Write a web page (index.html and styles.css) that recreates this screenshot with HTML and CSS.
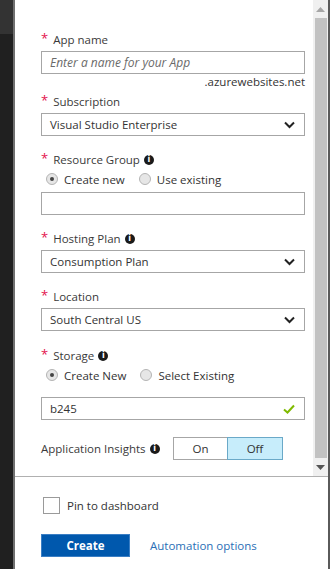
FILE: index.html
```
<!DOCTYPE html>
<html lang="en">
<head>
    <meta charset="UTF-8">
    <meta name="viewport" content="width=device-width, initial-scale=1.0">
    <title>Function App</title>
    <link rel="stylesheet" href="styles.css">
</head>
<body>
    <div class="shell">
        <div class="rail">
            <div class="rail-top"></div>
        </div>
        <div class="blade">
            <div class="content">
                <form class="form">
                    <div class="label"><span class="req">*</span>App name</div>
                    <input class="field placeholder" type="text" placeholder="Enter a name for your App">
                    <div class="suffix">.azurewebsites.net</div>

                    <div class="label sub"><span class="req">*</span>Subscription</div>
                    <div class="select">
                        <span>Visual Studio Enterprise</span>
                        <svg class="chev" width="11" height="8" viewBox="0 0 11 8"><path d="M1 1.5 L5.5 6 L10 1.5" fill="none" stroke="#222" stroke-width="2"/></svg>
                    </div>

                    <div class="label gap"><span class="req">*</span>Resource Group <span class="info">i</span></div>
                    <div class="radios">
                        <span class="radio"><span class="dot on"></span>Create new</span>
                        <span class="radio"><span class="dot"></span>Use existing</span>
                    </div>
                    <div class="field after-radios"></div>

                    <div class="label gap"><span class="req">*</span>Hosting Plan <span class="info">i</span></div>
                    <div class="select">
                        <span>Consumption Plan</span>
                        <svg class="chev" width="11" height="8" viewBox="0 0 11 8"><path d="M1 1.5 L5.5 6 L10 1.5" fill="none" stroke="#222" stroke-width="2"/></svg>
                    </div>

                    <div class="label gap"><span class="req">*</span>Location</div>
                    <div class="select">
                        <span>South Central US</span>
                        <svg class="chev" width="11" height="8" viewBox="0 0 11 8"><path d="M1 1.5 L5.5 6 L10 1.5" fill="none" stroke="#222" stroke-width="2"/></svg>
                    </div>

                    <div class="label gap wide"><span class="req">*</span>Storage <span class="info">i</span></div>
                    <div class="radios">
                        <span class="radio"><span class="dot on"></span>Create New</span>
                        <span class="radio"><span class="dot"></span>Select Existing</span>
                    </div>
                    <div class="select storage">
                        <span>b245</span>
                        <svg class="check" width="12" height="10" viewBox="0 0 12 10"><path d="M1 5.5 L4.5 8.5 L11 1.5" fill="none" stroke="#7fba00" stroke-width="2"/></svg>
                    </div>

                    <div class="insights">
                        <span class="insights-label">Application Insights <span class="info">i</span></span>
                        <div class="toggle">
                            <span class="opt">On</span>
                            <span class="opt active">Off</span>
                        </div>
                    </div>
                </form>
                <div class="scrollbar">
                    <svg class="arrow" width="9" height="5" viewBox="0 0 9 5"><path d="M0 5 L4.5 0 L9 5 Z" fill="#a6a6a6"/></svg>
                    <div class="thumb"></div>
                    <svg class="arrow" width="9" height="5" viewBox="0 0 9 5"><path d="M0 0 L4.5 5 L9 0 Z" fill="#555"/></svg>
                </div>
            </div>
            <div class="footer">
                <label class="pin"><span class="box"></span>Pin to dashboard</label>
                <div class="actions">
                    <button type="button" class="create">Create</button>
                    <a href="#" class="link">Automation options</a>
                </div>
            </div>
        </div>
    </div>
</body>
</html>
```
FILE: styles.css
```
body {
    margin: 0;
    font-family: "Open Sans", "Noto Sans", sans-serif;
    font-size: 11.5px;
    color: #333;
    background: #fff;
}
.shell {
    display: flex;
    width: 330px;
    height: 569px;
}
.rail {
    width: 13px;
    background: #202020;
    border-right: 2px solid #707070;
}
.rail-top {
    height: 34px;
    background: #333;
}
.blade {
    flex: 1;
    display: flex;
    flex-direction: column;
    border-right: 2px solid #5a5a5a;
}
.content {
    display: flex;
    height: 476px;
}
.form {
    flex: 1;
    padding: 32px 8px 0 26px;
}
.label {
    height: 16px;
    line-height: 16px;
    margin-bottom: 3px;
    color: #3a3a3a;
    display: flex;
    align-items: center;
}
.label.sub {
    margin-top: 4px;
}
.label.gap {
    margin-top: 16px;
}
.label.wide {
    margin-top: 17px;
}
.req {
    color: #e3134d;
    margin-right: 5px;
    font-size: 13px;
    position: relative;
    top: -2px;
}
.info {
    display: inline-flex;
    justify-content: center;
    align-items: center;
    width: 10px;
    height: 10px;
    border-radius: 50%;
    background: #1a1a1a;
    color: #fff;
    font-size: 8px;
    font-weight: bold;
    font-family: "DejaVu Sans", sans-serif;
    margin-left: 4px;
    line-height: 1;
}
.field,
.select {
    box-sizing: border-box;
    display: block;
    width: 264px;
    height: 23px;
    border: 1px solid #a6a6a6;
    margin: 0;
    padding: 0 8px;
    font: inherit;
    color: #333;
    background: #fff;
}
.placeholder::placeholder {
    font-style: italic;
    font-size: 12px;
    color: #6a6a6a;
}
.suffix {
    text-align: right;
    width: 264px;
    height: 16px;
    line-height: 16px;
    color: #333;
}
.select {
    display: flex;
    align-items: center;
    justify-content: space-between;
    padding-right: 9px;
}
.radios {
    display: flex;
    height: 16px;
    align-items: center;
    padding-left: 5px;
    margin-top: 1px;
}
.radio {
    display: flex;
    align-items: center;
    margin-right: 14px;
    color: #333;
}
.dot {
    box-sizing: border-box;
    width: 12px;
    height: 12px;
    border-radius: 50%;
    border: 1px solid #b4b4b4;
    background: #e6e6e6;
    margin-right: 6px;
    position: relative;
}
.dot.on::after {
    content: "";
    position: absolute;
    left: 3px;
    top: 3px;
    width: 4px;
    height: 4px;
    border-radius: 50%;
    background: #444;
}
.after-radios {
    margin-top: 5px;
}
.storage {
    margin-top: 14px;
}
.insights {
    display: flex;
    align-items: center;
    margin-top: 17px;
}
.insights-label {
    display: flex;
    align-items: center;
    width: 132px;
    color: #3a3a3a;
}
.toggle {
    display: flex;
    height: 23px;
}
.opt {
    box-sizing: border-box;
    width: 55px;
    display: flex;
    align-items: center;
    justify-content: center;
    border: 1px solid #a6a6a6;
}
.opt.active {
    background: #c7edfb;
    border-color: #6aa9c8;
    margin-left: -1px;
    width: 56px;
}
.scrollbar {
    width: 15px;
    background: #f0f0f0;
    display: flex;
    flex-direction: column;
    align-items: center;
}
.arrow {
    margin: 7px 0 6px;
}
.thumb {
    flex: 1;
    width: 12px;
    background: #c2c2c2;
}
.footer {
    flex: 1;
    border-top: 1px solid #b0b0b0;
    padding: 20px 0 0 26px;
}
.pin {
    display: flex;
    align-items: center;
    height: 17px;
    padding-left: 2px;
    color: #333;
}
.box {
    box-sizing: border-box;
    width: 17px;
    height: 17px;
    border: 1px solid #9a9a9a;
    margin-right: 7px;
}
.actions {
    display: flex;
    align-items: center;
    margin-top: 20px;
}
.create {
    width: 89px;
    height: 23px;
    background: #0058ad;
    border: 1px solid #3a7ec4;
    color: #fff;
    font: inherit;
    font-weight: bold;
    padding: 0;
}
.link {
    margin-left: 20px;
    color: #2a6fb6;
    text-decoration: none;
}
```
